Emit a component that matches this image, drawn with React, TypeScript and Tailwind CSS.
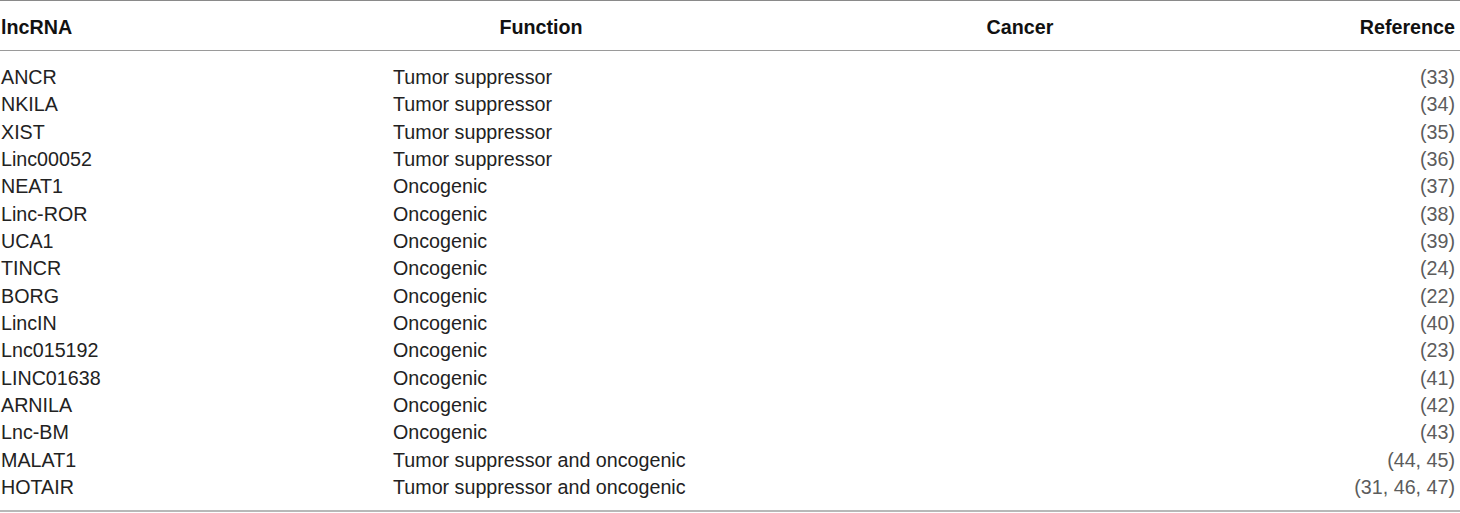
const rows: [string, string, string][] = [
  ["ANCR", "Tumor suppressor", "(33)"],
  ["NKILA", "Tumor suppressor", "(34)"],
  ["XIST", "Tumor suppressor", "(35)"],
  ["Linc00052", "Tumor suppressor", "(36)"],
  ["NEAT1", "Oncogenic", "(37)"],
  ["Linc-ROR", "Oncogenic", "(38)"],
  ["UCA1", "Oncogenic", "(39)"],
  ["TINCR", "Oncogenic", "(24)"],
  ["BORG", "Oncogenic", "(22)"],
  ["LincIN", "Oncogenic", "(40)"],
  ["Lnc015192", "Oncogenic", "(23)"],
  ["LINC01638", "Oncogenic", "(41)"],
  ["ARNILA", "Oncogenic", "(42)"],
  ["Lnc-BM", "Oncogenic", "(43)"],
  ["MALAT1", "Tumor suppressor and oncogenic", "(44, 45)"],
  ["HOTAIR", "Tumor suppressor and oncogenic", "(31, 46, 47)"],
];

export default function App() {
  return (
    <div className="w-[1460px] bg-white font-['Liberation_Sans',Arial,sans-serif] text-[19.7px] text-[#222]">
      <div className="border-t border-[#8a8a8a]">
        {/* Header */}
        <div className="grid grid-cols-[392px_298px_660px_110px] h-[50px] pt-[4px] items-center font-bold text-[#111] border-b border-[#9a9a9a]">
          <div className="pl-[1px]">lncRNA</div>
          <div className="text-center">Function</div>
          <div className="text-center">Cancer</div>
          <div className="text-right pr-[5px]">Reference</div>
        </div>

        {/* Body */}
        <div className="pt-[13px] pb-[9px] border-b-2 border-[#b8b8b8]">
          {rows.map(([name, fn, ref]) => (
            <div key={name} className="grid grid-cols-[392px_298px_660px_110px] leading-[27.33px] h-[27.33px]">
              <div className="pl-[1px]">{name}</div>
              <div className="pl-[1px] whitespace-nowrap">{fn}</div>
              <div></div>
              <div className="text-right pr-[5px] text-[#5c5c5c] whitespace-nowrap">{ref}</div>
            </div>
          ))}
        </div>
      </div>
    </div>
  );
}
